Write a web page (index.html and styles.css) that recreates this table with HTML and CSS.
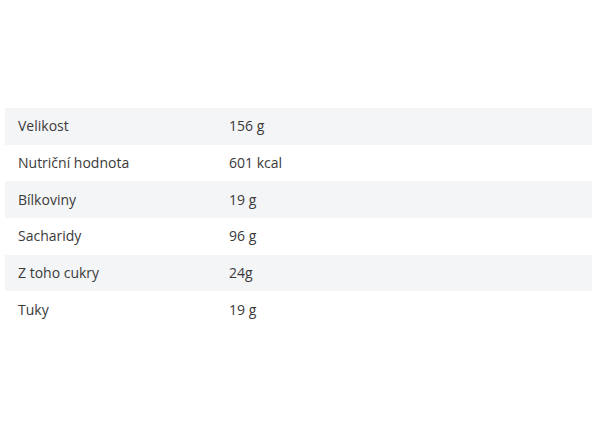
FILE: index.html
```html
<!DOCTYPE html>
<html lang="cs">
<head>
<meta charset="utf-8">
<link rel="stylesheet" href="styles.css">
</head>
<body>
<table class="params">
  <tbody>
    <tr class="alt"><td class="name">Velikost</td><td class="val">156 g</td></tr>
    <tr><td class="name">Nutriční hodnota</td><td class="val">601 kcal</td></tr>
    <tr class="alt"><td class="name">Bílkoviny</td><td class="val">19 g</td></tr>
    <tr><td class="name">Sacharidy</td><td class="val">96 g</td></tr>
    <tr class="alt"><td class="name">Z toho cukry</td><td class="val">24g</td></tr>
    <tr><td class="name">Tuky</td><td class="val">19 g</td></tr>
  </tbody>
</table>
</body>
</html>
```
FILE: styles.css
```css
html, body {
  margin: 0;
  padding: 0;
  background: #ffffff;
}
body {
  padding: 108px 8px 0 5px;
  font-family: "Open Sans", "Liberation Sans", sans-serif;
  font-size: 14px;
  color: #3a3a3a;
}
.params {
  width: 587px;
  border-collapse: collapse;
}
.params td {
  height: 36.67px;
  padding: 0 0 0 13px;
  vertical-align: middle;
  line-height: 1;
}
.params .name {
  width: 198px;
}
.params .alt {
  background: #f4f5f7;
}
```
